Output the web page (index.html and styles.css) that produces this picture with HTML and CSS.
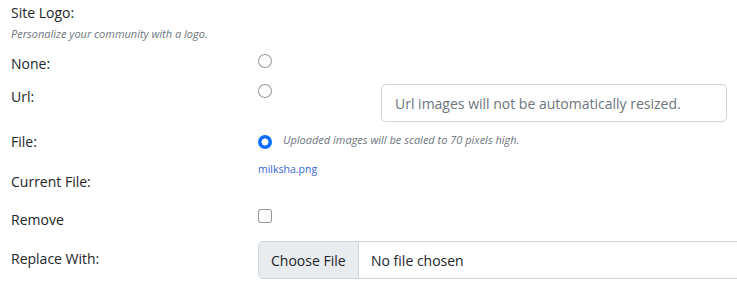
FILE: index.html
```html
<!DOCTYPE html>
<html lang="en">
<head>
<meta charset="utf-8">
<title>Site Logo</title>
<link rel="stylesheet" href="styles.css">
</head>
<body>
<form class="logo-form">
  <div class="head">
    <div class="title">Site Logo:</div>
    <div class="desc">Personalize your community with a logo.</div>
  </div>

  <div class="row row-none">
    <label class="lbl" for="logo-none">None:</label>
    <div class="ctl"><input class="radio" type="radio" name="logo" id="logo-none"></div>
  </div>

  <div class="row row-url">
    <label class="lbl" for="logo-url">Url:</label>
    <div class="ctl">
      <input class="radio" type="radio" name="logo" id="logo-url">
      <input class="text-input" type="text" placeholder="Url images will not be automatically resized.">
    </div>
  </div>

  <div class="row row-file">
    <label class="lbl" for="logo-file">File:</label>
    <div class="ctl">
      <input class="radio" type="radio" name="logo" id="logo-file" checked>
      <span class="hint">Uploaded images will be scaled to 70 pixels high.</span>
    </div>
  </div>

  <div class="row row-current">
    <div class="lbl">Current File:</div>
    <div class="ctl"><a class="file-link" href="#">milksha.png</a></div>
  </div>

  <div class="row row-remove">
    <label class="lbl" for="logo-remove">Remove</label>
    <div class="ctl"><input class="check" type="checkbox" id="logo-remove"></div>
  </div>

  <div class="row row-replace">
    <div class="lbl">Replace With:</div>
    <div class="ctl">
      <div class="file-input">
        <span class="file-btn">Choose File</span>
        <span class="file-name">No file chosen</span>
      </div>
    </div>
  </div>
</form>
</body>
</html>
```
FILE: styles.css
```css
* { box-sizing: border-box; }

html, body {
  margin: 0;
  background: #ffffff;
}

body {
  font-family: "Open Sans", "Noto Sans", "Liberation Sans", sans-serif;
  font-size: 14px;
  color: #212529;
  overflow: hidden;
}

.logo-form {
  padding: 3px 0 0 11px;
}

.title {
  font-size: 14px;
  line-height: 20px;
}

.desc {
  margin-top: 3px;
  font-size: 11px;
  line-height: 16px;
  font-style: italic;
  color: #6c757d;
}

.row {
  display: grid;
  grid-template-columns: 247px 1fr;
  align-items: start;
}

.lbl {
  font-size: 14px;
  line-height: 20px;
}

.ctl {
  display: flex;
  align-items: flex-start;
}

.radio,
.check {
  appearance: none;
  -webkit-appearance: none;
  margin: 0;
  width: 14px;
  height: 14px;
  border: 1px solid rgba(0, 0, 0, 0.4);
  background: #fff;
  flex: none;
}

.radio { border-radius: 50%; }

.radio:checked {
  border: none;
  background: radial-gradient(circle, #ffffff 0 3.3px, #0d6efd 3.8px);
}

.check { border-radius: 3px; }

.row-none { margin-top: 12px; }
.row-none .lbl { margin-top: 0; }

.row-url { margin-top: 10px; }
.row-url .lbl { margin-top: 3px; }

.text-input {
  margin: 0 0 0 109px;
  width: 346px;
  height: 38px;
  padding: 0 13px;
  border: 1px solid #ced4da;
  border-radius: 5px;
  font-family: inherit;
  font-size: 14px;
  color: #212529;
  background: #fff;
}

.text-input::placeholder { color: #6c757d; opacity: 1; }

.row-file { margin-top: 10px; }
.row-file .radio { margin-top: 3px; }

.hint {
  margin-left: 11px;
  font-size: 11px;
  line-height: 16px;
  font-style: italic;
  color: #6c757d;
}

.row-current { margin-top: 9px; }
.row-current .lbl { margin-top: 11px; }

.file-link {
  font-size: 10.5px;
  line-height: 16px;
  color: #3a66d8;
  text-decoration: none;
}

.row-remove { margin-top: 17px; }
.row-remove .lbl { margin-top: 1px; }

.row-replace { margin-top: 11px; }
.row-replace .lbl { margin-top: 8px; }

.file-input {
  display: flex;
  width: 500px;
  height: 38px;
  border: 1px solid #ced4da;
  border-radius: 5px 0 0 5px;
  overflow: hidden;
  font-size: 14px;
}

.file-btn {
  display: flex;
  align-items: center;
  padding: 0 12px;
  background: #e9ecef;
  border-right: 1px solid #ced4da;
  width: 100px;
}

.file-name {
  display: flex;
  align-items: center;
  padding-left: 12px;
}
```
